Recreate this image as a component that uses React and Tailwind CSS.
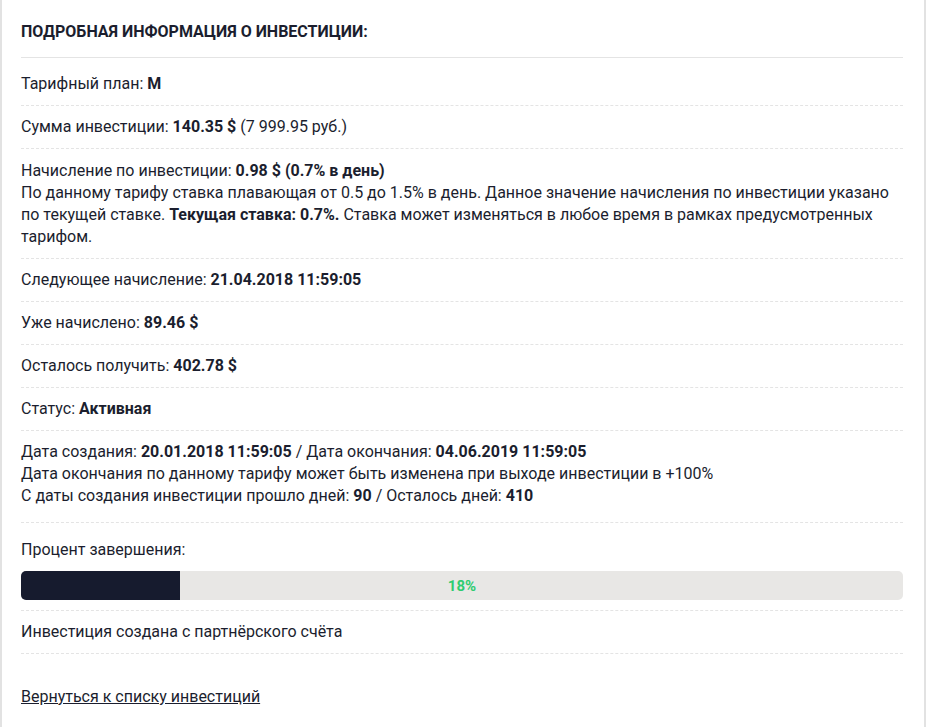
import React from "react";

const rowCls = "py-[10px] border-b border-dashed border-[#e4e4e4]";

const Row = ({ children, className = "" }) => (
  <div className={`${rowCls} ${className}`}>{children}</div>
);

export default function App() {
  const percent = 18;

  return (
    <div
      className="min-h-[727px] bg-white text-[#1b1e2e] text-[16px] leading-[22px] border-l-2 border-r-2 border-[#e2e2e2] pl-[19px] pr-[21px] w-[926px]"
      style={{ fontFamily: "Roboto, 'Noto Sans', sans-serif" }}
    >
      {/* Header */}
      <div className="pt-[21px] pb-[14px] border-b border-[#e4e4e4]">
        <h2 className="font-bold uppercase text-[16px]">Подробная информация о инвестиции:</h2>
      </div>

      <Row className="pt-[15px]">
        Тарифный план: <b>M</b>
      </Row>

      <Row>
        Сумма инвестиции: <b>140.35 $</b> (7 999.95 руб.)
      </Row>

      <Row className="pt-[11px]">
        Начисление по инвестиции: <b>0.98 $ (0.7% в день)</b>
        <br />
        По данному тарифу ставка плавающая от 0.5 до 1.5% в день. Данное значение начисления по инвестиции указано
        по текущей ставке. <b>Текущая ставка: 0.7%.</b> Ставка может изменяться в любое время в рамках предусмотренных
        тарифом.
      </Row>

      <Row>
        Следующее начисление: <b>21.04.2018 11:59:05</b>
      </Row>

      <Row>
        Уже начислено: <b>89.46 $</b>
      </Row>

      <Row>
        Осталось получить: <b>402.78 $</b>
      </Row>

      <Row>
        Статус: <b>Активная</b>
      </Row>

      <Row className="pb-[15px]">
        Дата создания: <b>20.01.2018 11:59:05</b> / Дата окончания: <b>04.06.2019 11:59:05</b>
        <br />
        Дата окончания по данному тарифу может быть изменена при выходе инвестиции в +100%
        <br />
        С даты создания инвестиции прошло дней: <b>90</b> / Осталось дней: <b>410</b>
      </Row>

      {/* Progress */}
      <div className="pt-[16px] pb-[10px] border-b border-dashed border-[#e4e4e4]">
        <div>Процент завершения:</div>
        <div className="relative mt-[10px] h-[29px] rounded-[5px] bg-[#e8e7e5] overflow-hidden">
          <div className="h-full bg-[#161b2e]" style={{ width: `${percent}%` }} />
          <div className="absolute inset-0 flex items-center justify-center text-[15px] font-bold text-[#2ecc71]">
            {percent}%
          </div>
        </div>
      </div>

      <Row>Инвестиция создана с партнёрского счёта</Row>

      <div className="pt-[32px]">
        <a href="#" className="underline text-[#1b1e2e]">
          Вернуться к списку инвестиций
        </a>
      </div>
    </div>
  );
}
